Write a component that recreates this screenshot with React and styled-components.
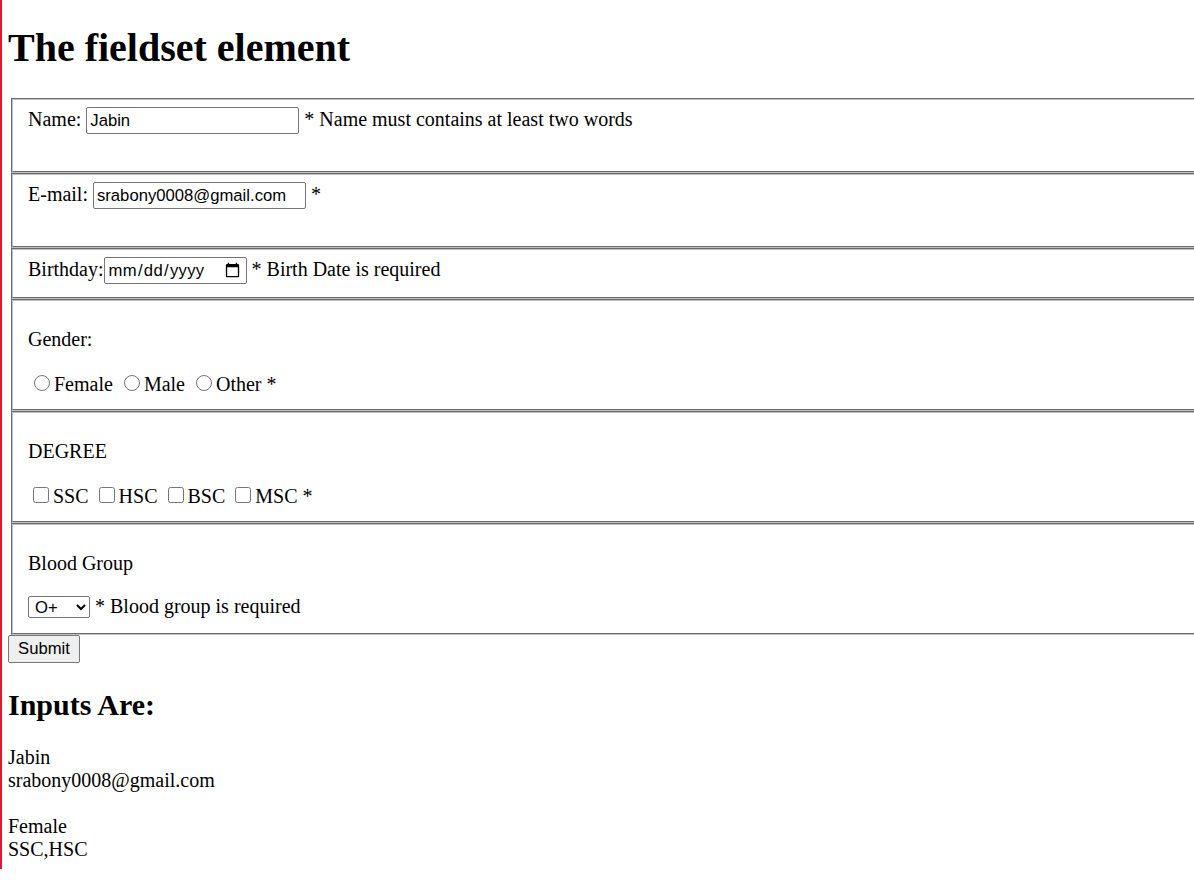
import React from 'react';
import styled, { createGlobalStyle } from 'styled-components';

const GlobalStyle = createGlobalStyle`
  html {
    border-left: 2px solid #e0182d;
    overflow: hidden;
    background: #ffffff;
  }
  body {
    margin: 0 0 8px 6px;
    font-family: "Liberation Serif", "Times New Roman", serif;
    font-size: 20px;
    line-height: 23px;
    color: #000000;
  }
`;

const Title = styled.h1`
  font-size: 40px;
  line-height: 46px;
  font-weight: bold;
  margin: 25px 0 27px;
`;

const Form = styled.form`
  display: block;
  margin: 0;
`;

const FieldSet = styled.fieldset`
  display: block;
  width: 1400px;
  margin: 0 2px 0 3px;
  padding: 7px 15px 13px;
  border: 2px groove #c0c0c0;
  min-width: 0;
`;

const Row = styled.div`
  line-height: 23px;
  white-space: nowrap;
`;

const EmptyLine = styled.div`
  height: ${(p) => p.$h || 24}px;
`;

const Caption = styled.p`
  margin: 20px 0;
  line-height: 23px;
`;

const controlFont = `
  font-family: "Liberation Sans", Arial, sans-serif;
  font-size: 16.67px;
  color: #000000;
`;

const TextInput = styled.input`
  ${controlFont}
  box-sizing: border-box;
  width: 213px;
  height: 27px;
  margin: 0;
  padding: 1px 3px;
  border: 1px solid #767676;
  border-radius: 2px;
  background: #ffffff;
`;

const DateInput = styled.input`
  ${controlFont}
  box-sizing: border-box;
  width: 143px;
  height: 27px;
  margin: 0;
  padding: 1px 3px;
  border: 1px solid #767676;
  border-radius: 2px;
  background: #ffffff;
  letter-spacing: 0.3px;
`;

const Radio = styled.input`
  box-sizing: border-box;
  width: 16px;
  height: 16px;
  margin: 4px 4px 0 6px;
`;

const Check = styled.input`
  box-sizing: border-box;
  width: 16px;
  height: 16px;
  margin: 4px 4px 4px 5px;
`;

const Select = styled.select`
  ${controlFont}
  box-sizing: border-box;
  width: 62px;
  height: 22px;
  margin: 1px 0 2px;
  padding: 0 2px;
  border: 1px solid #767676;
  border-radius: 2px;
  background: #ffffff;
`;

const SubmitButton = styled.button`
  ${controlFont}
  box-sizing: border-box;
  height: 28px;
  width: 72px;
  margin: 0;
  padding: 1px 8px;
  border: 1px solid #767676;
  border-radius: 2px;
  background: #efefef;
`;

const SubTitle = styled.h2`
  font-size: 30px;
  line-height: 34.5px;
  font-weight: bold;
  margin: 25px 0 23px;
`;

const OutputLine = styled.div`
  min-height: 23px;
  line-height: 23px;
`;

const genders = ['Female', 'Male', 'Other'];
const degrees = ['SSC', 'HSC', 'BSC', 'MSC'];
const bloodGroups = ['A+', 'A-', 'B+', 'B-', 'O+', 'O-', 'AB+', 'AB-'];
const outputs = ['Jabin', 'srabony0008@gmail.com', '', 'Female', 'SSC,HSC'];

export default function App() {
  return (
    <>
      <GlobalStyle />
      <Title>The fieldset element</Title>
      <Form onSubmit={(e) => e.preventDefault()}>
        <FieldSet>
          <Row>
            Name: <TextInput type="text" defaultValue="Jabin" /> * Name must contains at least two words
          </Row>
          <EmptyLine $h={24} />
        </FieldSet>
        <FieldSet>
          <Row>
            E-mail: <TextInput type="email" defaultValue="srabony0008@gmail.com" /> *
          </Row>
          <EmptyLine $h={24} />
        </FieldSet>
        <FieldSet>
          <Row>
            Birthday:<DateInput type="date" /> * Birth Date is required
          </Row>
        </FieldSet>
        <FieldSet>
          <Caption>Gender:</Caption>
          <Row>
            {genders.map((g, i) => (
              <React.Fragment key={g}>
                <Radio type="radio" name="gender" />
                {g}
                {i < genders.length - 1 ? ' ' : ' *'}
              </React.Fragment>
            ))}
          </Row>
        </FieldSet>
        <FieldSet>
          <Caption>DEGREE</Caption>
          <Row>
            {degrees.map((d, i) => (
              <React.Fragment key={d}>
                <Check type="checkbox" />
                {d}
                {i < degrees.length - 1 ? ' ' : ' *'}
              </React.Fragment>
            ))}
          </Row>
        </FieldSet>
        <FieldSet>
          <Caption>Blood Group</Caption>
          <Row>
            <Select defaultValue="O+">
              {bloodGroups.map((b) => (
                <option key={b} value={b}>{b}</option>
              ))}
            </Select>{' '}
            * Blood group is required
          </Row>
        </FieldSet>
        <SubmitButton type="submit">Submit</SubmitButton>
      </Form>
      <SubTitle>Inputs Are:</SubTitle>
      {outputs.map((line, i) => (
        <OutputLine key={i}>{line}</OutputLine>
      ))}
    </>
  );
}
